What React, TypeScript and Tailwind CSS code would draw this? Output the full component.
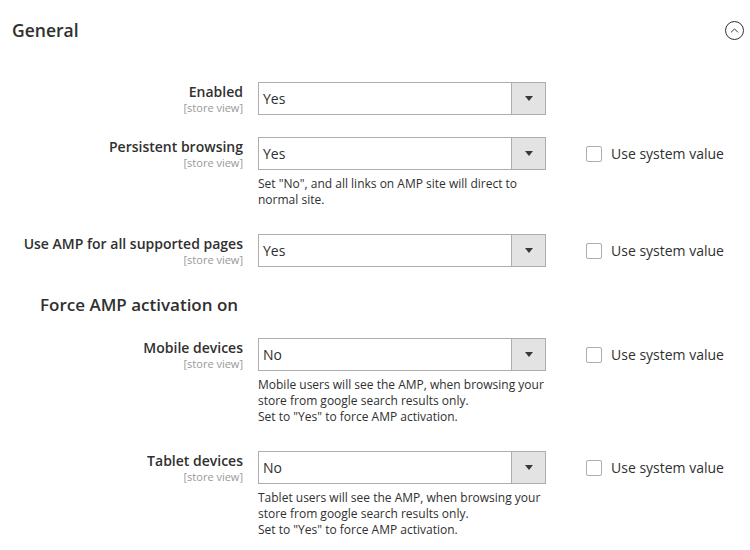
import { ChevronUp } from "lucide-react";

interface Row {
    label: string;
    value: string;
    note?: string[];
    useSystem: boolean;
}

const topRows: Row[] = [
    { label: "Enabled", value: "Yes", useSystem: false },
    {
        label: "Persistent browsing",
        value: "Yes",
        note: ['Set "No", and all links on AMP site will direct to', "normal site."],
        useSystem: true,
    },
    { label: "Use AMP for all supported pages", value: "Yes", useSystem: true },
];

const deviceRows: Row[] = [
    {
        label: "Mobile devices",
        value: "No",
        note: [
            "Mobile users will see the AMP, when browsing your",
            "store from google search results only.",
            'Set to "Yes" to force AMP activation.',
        ],
        useSystem: true,
    },
    {
        label: "Tablet devices",
        value: "No",
        note: [
            "Tablet users will see the AMP, when browsing your",
            "store from google search results only.",
            'Set to "Yes" to force AMP activation.',
        ],
        useSystem: true,
    },
];

function FieldRow({ row }: { row: Row }) {
    return (
        <div className="flex">
            {/* Label */}
            <div className="w-[243px] shrink-0 text-right pt-[1px]">
                <div className="text-[14px] leading-[18px] font-semibold text-[#303030]">{row.label}</div>
                <div className="text-[11px] leading-[12px] text-[#999999] mt-[1px]">[store view]</div>
            </div>

            {/* Control */}
            <div className="ml-[15px] w-[288px] shrink-0">
                <div className="flex h-[33px] border border-[#adadad] bg-white">
                    <div className="flex-1 flex items-center pl-[4px] text-[14px] text-[#303030]">{row.value}</div>
                    <div className="w-[34px] flex items-center justify-center bg-[#e3e3e3] border-l border-[#adadad]">
                        <svg width="8" height="5" viewBox="0 0 8 5">
                            <path d="M0 0 H8 L4 5 Z" fill="#41362f" />
                        </svg>
                    </div>
                </div>
                {row.note && (
                    <div className="mt-[6px] pb-[4px] text-[12px] leading-[16px] text-[#303030]">
                        {row.note.map((line) => (
                            <div key={line}>{line}</div>
                        ))}
                    </div>
                )}
            </div>

            {/* Use system value */}
            {row.useSystem && (
                <div className="ml-[40px] h-[33px] flex items-center gap-[9px]">
                    <div className="w-[16px] h-[16px] border border-[#adadad] rounded-[2px] bg-white" />
                    <span className="text-[14px] text-[#303030]">Use system value</span>
                </div>
            )}
        </div>
    );
}

export default function App() {
    return (
        <div className="w-[750px] h-[550px] bg-white overflow-hidden" style={{ fontFamily: '"Open Sans", sans-serif' }}>
            {/* Section header */}
            <div className="flex items-center justify-between pl-[12px] pr-[6px] pt-[18px]">
                <h2 className="text-[17.5px] leading-[24px] font-semibold text-[#303030]">General</h2>
                <div className="w-[19px] h-[19px] rounded-full border border-[#303030] flex items-center justify-center">
                    <ChevronUp className="w-[13px] h-[13px] text-[#303030]" strokeWidth={1.8} />
                </div>
            </div>

            <div className="mt-[40px] flex flex-col gap-[22px]">
                {topRows.map((row) => (
                    <FieldRow key={row.label} row={row} />
                ))}

                <div className="pl-[40px] mt-[4px] mb-[-1px] text-[17px] leading-[24px] font-semibold text-[#303030]">
                    Force AMP activation on
                </div>

                {deviceRows.map((row) => (
                    <FieldRow key={row.label} row={row} />
                ))}
            </div>
        </div>
    );
}
